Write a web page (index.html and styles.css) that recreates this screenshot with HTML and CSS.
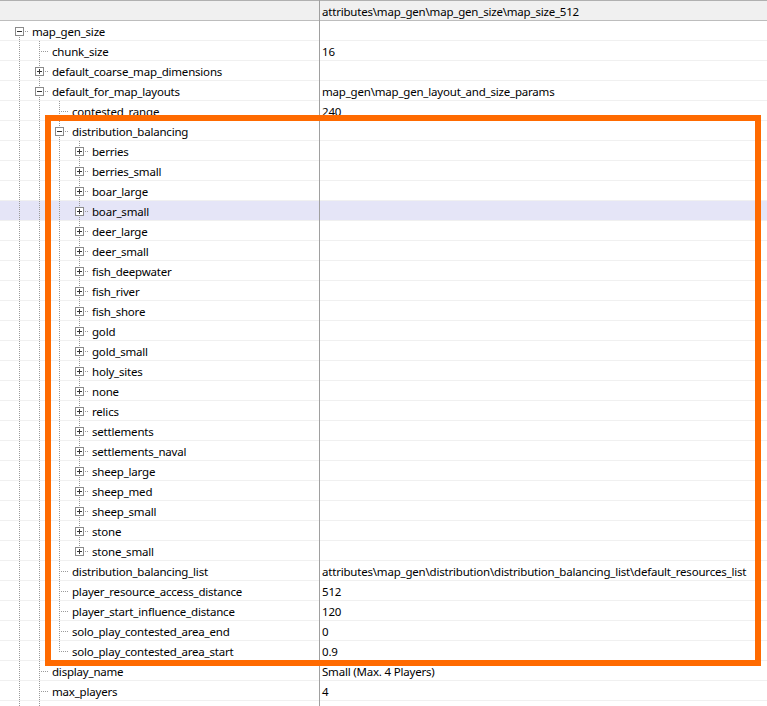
FILE: index.html
```html
<!DOCTYPE html>
<html lang="en">
<head>
    <meta charset="UTF-8">
    <title>map_size_512</title>
    <link rel="stylesheet" href="styles.css">
</head>
<body>
    <div class="grid">
        <div class="head">
            <div class="tree"></div>
            <div class="val">attributes\map_gen\map_gen_size\map_size_512</div>
        </div>

        <div class="row">
            <div class="tree"><span class="c top"><i class="box"></i></span><span class="label">map_gen_size</span></div>
            <div class="val"></div>
        </div>
        <div class="row">
            <div class="tree"><span class="c v"></span><span class="c tee"></span><span class="label">chunk_size</span></div>
            <div class="val">16</div>
        </div>
        <div class="row">
            <div class="tree"><span class="c v"></span><span class="c tee"><i class="box plus"></i></span><span class="label">default_coarse_map_dimensions</span></div>
            <div class="val"></div>
        </div>
        <div class="row">
            <div class="tree"><span class="c v"></span><span class="c tee"><i class="box"></i></span><span class="label">default_for_map_layouts</span></div>
            <div class="val">map_gen\map_gen_layout_and_size_params</div>
        </div>
        <div class="row">
            <div class="tree"><span class="c v"></span><span class="c v"></span><span class="c tee"></span><span class="label">contested_range</span></div>
            <div class="val">240</div>
        </div>
        <div class="row">
            <div class="tree"><span class="c v"></span><span class="c v"></span><span class="c tee"><i class="box"></i></span><span class="label">distribution_balancing</span></div>
            <div class="val"></div>
        </div>

        <div class="row">
            <div class="tree"><span class="c v"></span><span class="c v"></span><span class="c v"></span><span class="c tee"><i class="box plus"></i></span><span class="label">berries</span></div>
            <div class="val"></div>
        </div>
        <div class="row">
            <div class="tree"><span class="c v"></span><span class="c v"></span><span class="c v"></span><span class="c tee"><i class="box plus"></i></span><span class="label">berries_small</span></div>
            <div class="val"></div>
        </div>
        <div class="row">
            <div class="tree"><span class="c v"></span><span class="c v"></span><span class="c v"></span><span class="c tee"><i class="box plus"></i></span><span class="label">boar_large</span></div>
            <div class="val"></div>
        </div>
        <div class="row sel">
            <div class="tree"><span class="c v"></span><span class="c v"></span><span class="c v"></span><span class="c tee"><i class="box plus"></i></span><span class="label">boar_small</span></div>
            <div class="val"></div>
        </div>
        <div class="row">
            <div class="tree"><span class="c v"></span><span class="c v"></span><span class="c v"></span><span class="c tee"><i class="box plus"></i></span><span class="label">deer_large</span></div>
            <div class="val"></div>
        </div>
        <div class="row">
            <div class="tree"><span class="c v"></span><span class="c v"></span><span class="c v"></span><span class="c tee"><i class="box plus"></i></span><span class="label">deer_small</span></div>
            <div class="val"></div>
        </div>
        <div class="row">
            <div class="tree"><span class="c v"></span><span class="c v"></span><span class="c v"></span><span class="c tee"><i class="box plus"></i></span><span class="label">fish_deepwater</span></div>
            <div class="val"></div>
        </div>
        <div class="row">
            <div class="tree"><span class="c v"></span><span class="c v"></span><span class="c v"></span><span class="c tee"><i class="box plus"></i></span><span class="label">fish_river</span></div>
            <div class="val"></div>
        </div>
        <div class="row">
            <div class="tree"><span class="c v"></span><span class="c v"></span><span class="c v"></span><span class="c tee"><i class="box plus"></i></span><span class="label">fish_shore</span></div>
            <div class="val"></div>
        </div>
        <div class="row">
            <div class="tree"><span class="c v"></span><span class="c v"></span><span class="c v"></span><span class="c tee"><i class="box plus"></i></span><span class="label">gold</span></div>
            <div class="val"></div>
        </div>
        <div class="row">
            <div class="tree"><span class="c v"></span><span class="c v"></span><span class="c v"></span><span class="c tee"><i class="box plus"></i></span><span class="label">gold_small</span></div>
            <div class="val"></div>
        </div>
        <div class="row">
            <div class="tree"><span class="c v"></span><span class="c v"></span><span class="c v"></span><span class="c tee"><i class="box plus"></i></span><span class="label">holy_sites</span></div>
            <div class="val"></div>
        </div>
        <div class="row">
            <div class="tree"><span class="c v"></span><span class="c v"></span><span class="c v"></span><span class="c tee"><i class="box plus"></i></span><span class="label">none</span></div>
            <div class="val"></div>
        </div>
        <div class="row">
            <div class="tree"><span class="c v"></span><span class="c v"></span><span class="c v"></span><span class="c tee"><i class="box plus"></i></span><span class="label">relics</span></div>
            <div class="val"></div>
        </div>
        <div class="row">
            <div class="tree"><span class="c v"></span><span class="c v"></span><span class="c v"></span><span class="c tee"><i class="box plus"></i></span><span class="label">settlements</span></div>
            <div class="val"></div>
        </div>
        <div class="row">
            <div class="tree"><span class="c v"></span><span class="c v"></span><span class="c v"></span><span class="c tee"><i class="box plus"></i></span><span class="label">settlements_naval</span></div>
            <div class="val"></div>
        </div>
        <div class="row">
            <div class="tree"><span class="c v"></span><span class="c v"></span><span class="c v"></span><span class="c tee"><i class="box plus"></i></span><span class="label">sheep_large</span></div>
            <div class="val"></div>
        </div>
        <div class="row">
            <div class="tree"><span class="c v"></span><span class="c v"></span><span class="c v"></span><span class="c tee"><i class="box plus"></i></span><span class="label">sheep_med</span></div>
            <div class="val"></div>
        </div>
        <div class="row">
            <div class="tree"><span class="c v"></span><span class="c v"></span><span class="c v"></span><span class="c tee"><i class="box plus"></i></span><span class="label">sheep_small</span></div>
            <div class="val"></div>
        </div>
        <div class="row">
            <div class="tree"><span class="c v"></span><span class="c v"></span><span class="c v"></span><span class="c tee"><i class="box plus"></i></span><span class="label">stone</span></div>
            <div class="val"></div>
        </div>
        <div class="row">
            <div class="tree"><span class="c v"></span><span class="c v"></span><span class="c v"></span><span class="c end"><i class="box plus"></i></span><span class="label">stone_small</span></div>
            <div class="val"></div>
        </div>

        <div class="row">
            <div class="tree"><span class="c v"></span><span class="c v"></span><span class="c tee"></span><span class="label">distribution_balancing_list</span></div>
            <div class="val">attributes\map_gen\distribution\distribution_balancing_list\default_resources_list</div>
        </div>
        <div class="row">
            <div class="tree"><span class="c v"></span><span class="c v"></span><span class="c tee"></span><span class="label">player_resource_access_distance</span></div>
            <div class="val">512</div>
        </div>
        <div class="row">
            <div class="tree"><span class="c v"></span><span class="c v"></span><span class="c tee"></span><span class="label">player_start_influence_distance</span></div>
            <div class="val">120</div>
        </div>
        <div class="row">
            <div class="tree"><span class="c v"></span><span class="c v"></span><span class="c tee"></span><span class="label">solo_play_contested_area_end</span></div>
            <div class="val">0</div>
        </div>
        <div class="row">
            <div class="tree"><span class="c v"></span><span class="c v"></span><span class="c end"></span><span class="label">solo_play_contested_area_start</span></div>
            <div class="val">0.9</div>
        </div>
        <div class="row">
            <div class="tree"><span class="c v"></span><span class="c tee"></span><span class="label">display_name</span></div>
            <div class="val">Small (Max. 4 Players)</div>
        </div>
        <div class="row">
            <div class="tree"><span class="c v"></span><span class="c tee"></span><span class="label">max_players</span></div>
            <div class="val">4</div>
        </div>
        <div class="row">
            <div class="tree"><span class="c v"></span><span class="c v"></span></div>
            <div class="val"></div>
        </div>

        <div class="mark"></div>
    </div>
</body>
</html>
```

FILE: styles.css
```css
* {
    margin: 0;
    padding: 0;
    box-sizing: border-box;
}
body {
    font-family: "Noto Sans", "Open Sans", sans-serif;
    font-size: 11.5px;
    letter-spacing: -0.2px;
    color: #000;
    background: #fff;
    overflow: hidden;
}
.grid {
    position: relative;
    display: flex;
    flex-direction: column;
}
/* column divider over every row */
.grid::after {
    content: "";
    position: absolute;
    left: 319px;
    top: 0;
    bottom: 0;
    width: 1px;
    background: #a0a0a0;
}
.head {
    display: flex;
    height: 21px;
    background: #f0f0f0;
    border-top: 1px solid #b0b0b0;
    border-bottom: 1px solid #bdbdbd;
}
.row {
    display: flex;
    height: 20px;
    border-bottom: 1px solid #f0f0f0;
}
.row.sel {
    background: #e5e5f7;
}
.tree {
    display: flex;
    width: 319px;
    flex: none;
    padding-left: 9px;
}
.val {
    flex: 1;
    padding: 1px 0 0 3px;
    line-height: 19px;
    white-space: nowrap;
    overflow: hidden;
}
.label {
    padding: 1px 0 0 3px;
    line-height: 19px;
    white-space: nowrap;
}

/* tree guide columns */
.c {
    position: relative;
    width: 20px;
    flex: none;
}
.c::before,
.c::after {
    content: "";
    position: absolute;
}
.v::before,
.tee::before,
.end::before,
.top::before {
    left: 10px;
    width: 1px;
    background: repeating-linear-gradient(#9a9a9a 0 1px, transparent 1px 2px);
}
.v::before,
.tee::before {
    top: 0;
    bottom: -1px;
}
.end::before {
    top: 0;
    height: 10px;
}
.top::before {
    top: 10px;
    bottom: -1px;
}
.tee::after,
.end::after,
.top::after {
    left: 10px;
    top: 10px;
    width: 10px;
    height: 1px;
    background: repeating-linear-gradient(90deg, #9a9a9a 0 1px, transparent 1px 2px);
}

/* expand / collapse boxes */
.box {
    position: absolute;
    left: 6px;
    top: 6px;
    width: 9px;
    height: 9px;
    border: 1px solid #8a8a8a;
    background: #fff;
    z-index: 1;
}
.box::before,
.box::after {
    content: "";
    position: absolute;
    background: #333;
}
.box::before {
    left: 1px;
    top: 3px;
    width: 5px;
    height: 1px;
}
.plus::after {
    left: 3px;
    top: 1px;
    width: 1px;
    height: 5px;
}

/* highlight frame */
.mark {
    position: absolute;
    left: 45px;
    top: 115px;
    width: 716px;
    height: 551px;
    border: 6px solid #ff6a00;
    z-index: 2;
}
```
